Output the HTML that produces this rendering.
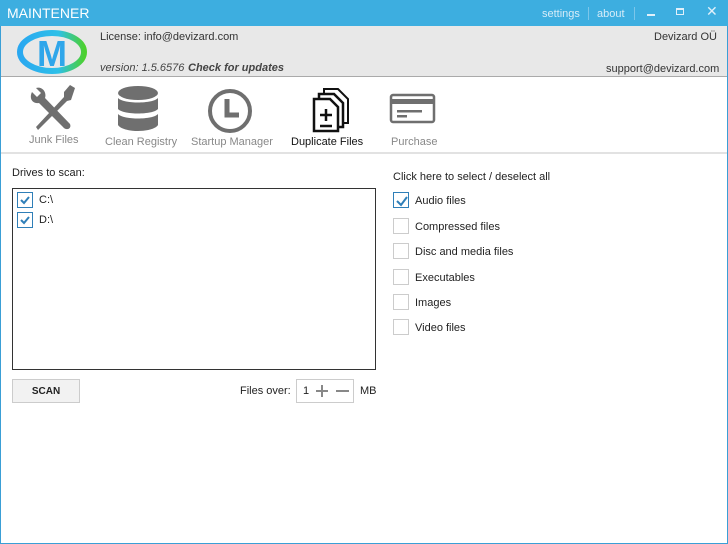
<!DOCTYPE html><html><head><style>
*{margin:0;padding:0;box-sizing:border-box}
body{width:728px;height:544px;overflow:hidden;font-family:"Liberation Sans",sans-serif;font-size:11px;color:#222;background:#fff;position:relative}
.a{position:absolute;white-space:nowrap}
.cb{position:absolute;width:16px;height:16px;border:1px solid #ccc;background:#fff}
.cb.on{border-color:#2f7fb8}
.cb.on svg{position:absolute;left:1px;top:1px}
.lbl{color:#888;font-size:11px}
</style></head><body>
<div class="a" style="left:0;top:0;width:728px;height:544px;border:1px solid #3a9fd6;border-top:none"></div>
<div class="a" style="left:0;top:0;width:728px;height:26px;background:#3daee0"></div>
<div class="a" style="left:7px;top:5px;color:#fff;font-size:14px">MAINTENER</div>
<div class="a" style="left:542px;top:8px;color:#d6ecf8;font-size:11px">settings</div>
<div class="a" style="left:588px;top:7px;width:1px;height:13px;background:#7cc6ea"></div>
<div class="a" style="left:597px;top:8px;color:#d6ecf8;font-size:11px">about</div>
<div class="a" style="left:634px;top:7px;width:1px;height:13px;background:#7cc6ea"></div>
<div class="a" style="left:647px;top:14px;width:8px;height:2px;background:#e0f0fa"></div>
<div class="a" style="left:676px;top:8px;width:8px;height:7px;border:1px solid #e0f0fa;border-top-width:2px"></div>
<div class="a" style="left:706px;top:3px;color:#e0f0fa;font-size:14px">✕</div>
<div class="a" style="left:1px;top:26px;width:726px;height:51px;background:#e8e8e8;border-bottom:1px solid #aaa"></div>
<svg class="a" style="left:16px;top:29px" width="72" height="46"><defs><linearGradient id="g" x1="0" x2="1"><stop offset="0" stop-color="#2aa8f0"/><stop offset=".6" stop-color="#2ec0e8"/><stop offset="1" stop-color="#4cd030"/></linearGradient></defs><ellipse cx="36" cy="23" rx="32" ry="19" fill="none" stroke="url(#g)" stroke-width="6"/><text x="36" y="37" text-anchor="middle" font-family="Liberation Sans" font-weight="bold" font-size="36" fill="#2fa6ea">M</text></svg>
<div class="a" style="left:100px;top:31px;color:#333">License: info@devizard.com</div>
<div class="a" style="left:100px;top:62px;color:#444;font-style:italic">version: 1.5.6576</div>
<div class="a" style="left:188px;top:62px;color:#444;font-style:italic;font-weight:bold">Check for updates</div>
<div class="a" style="left:654px;top:31px;color:#333">Devizard OÜ</div>
<div class="a" style="left:606px;top:63px;color:#333">support@devizard.com</div>
<!-- toolbar icons -->
<svg class="a" style="left:28px;top:84px" width="50" height="50" fill="#6f6f6f"><path d="M47 4 L42 1 L36 8 L36 13 L8 43 L10 46 L39 17 L43 16 Z"/><path d="M8 4 L13 9 L9 13 L4 8 C1 14 4 20 11 19 L35 43 C38 47 44 45 42 40 L17 14 C19 8 14 2 8 4Z"/></svg>
<svg class="a" style="left:117px;top:86px" width="42" height="48" fill="#6f6f6f"><ellipse cx="21" cy="7" rx="20" ry="7"/><path d="M1 12 C6 18 36 18 41 12 V23 C36 29 6 29 1 23Z"/><path d="M1 28 C6 34 36 34 41 28 V39 C36 47 6 47 1 39Z"/></svg>
<svg class="a" style="left:207px;top:88px" width="48" height="48"><circle cx="23" cy="23" r="20" fill="none" stroke="#6f6f6f" stroke-width="4"/><path d="M20 11 V27 H32" fill="none" stroke="#6f6f6f" stroke-width="5"/></svg>
<svg class="a" style="left:310px;top:85px" width="44" height="50" fill="none" stroke="#111" stroke-width="2.5"><path d="M4 14 H20 L28 22 V46 H4Z"/><path d="M9 14 V9 H24 L33 18 V42 H28"/><path d="M14 9 V4 H28 L38 14 V38 H33" stroke-width="2"/><path d="M16 24 V36 M10 30 H22 M10 41 H22"/></svg>
<svg class="a" style="left:389px;top:93px" width="48" height="32"><rect x="2" y="2" width="43" height="27" rx="2" fill="none" stroke="#6f6f6f" stroke-width="2.5"/><rect x="2" y="6" width="43" height="5" fill="#6f6f6f"/><rect x="8" y="17" width="25" height="2.5" fill="#6f6f6f"/><rect x="8" y="22" width="10" height="2.5" fill="#6f6f6f"/></svg>
<div class="a lbl" style="left:29px;top:134px">Junk Files</div>
<div class="a lbl" style="left:105px;top:136px">Clean Registry</div>
<div class="a lbl" style="left:191px;top:136px">Startup Manager</div>
<div class="a" style="left:291px;top:136px;color:#111">Duplicate Files</div>
<div class="a lbl" style="left:391px;top:136px">Purchase</div>
<div class="a" style="left:1px;top:152px;width:726px;height:2px;background:#e2e2e2"></div>
<!-- content -->
<div class="a" style="left:12px;top:167px">Drives to scan:</div>
<div class="a" style="left:12px;top:188px;width:364px;height:182px;border:1px solid #333"></div>
<div class="cb on" style="left:17px;top:192px"><svg width="12" height="12"><path d="M2 6 L5 9 L10 3" stroke="#2f7fb8" stroke-width="2" fill="none"/></svg></div>
<div class="a" style="left:39px;top:194px">C:\</div>
<div class="cb on" style="left:17px;top:212px"><svg width="12" height="12"><path d="M2 6 L5 9 L10 3" stroke="#2f7fb8" stroke-width="2" fill="none"/></svg></div>
<div class="a" style="left:39px;top:214px">D:\</div>
<div class="a" style="left:12px;top:379px;width:68px;height:24px;border:1px solid #ccc;background:#f2f2f2;font-size:10px;font-weight:bold;text-align:center;line-height:24px">SCAN</div>
<div class="a" style="left:240px;top:385px">Files over:</div>
<div class="a" style="left:296px;top:379px;width:58px;height:24px;border:1px solid #ccc"></div>
<div class="a" style="left:303px;top:385px">1</div>
<div class="a" style="left:316px;top:390px;width:12px;height:2px;background:#888"></div>
<div class="a" style="left:321px;top:385px;width:2px;height:12px;background:#888"></div>
<div class="a" style="left:336px;top:390px;width:13px;height:2px;background:#888"></div>
<div class="a" style="left:360px;top:385px">MB</div>
<div class="a" style="left:393px;top:171px">Click here to select / deselect all</div>
<div class="cb on" style="left:393px;top:192px"><svg width="14" height="14"><path d="M2 7 L6 11 L12 3" stroke="#2f7fb8" stroke-width="2" fill="none"/></svg></div>
<div class="a" style="left:415px;top:195px">Audio files</div>
<div class="cb" style="left:393px;top:218px"></div><div class="a" style="left:415px;top:221px">Compressed files</div>
<div class="cb" style="left:393px;top:243px"></div><div class="a" style="left:415px;top:246px">Disc and media files</div>
<div class="cb" style="left:393px;top:269px"></div><div class="a" style="left:415px;top:272px">Executables</div>
<div class="cb" style="left:393px;top:294px"></div><div class="a" style="left:415px;top:297px">Images</div>
<div class="cb" style="left:393px;top:319px"></div><div class="a" style="left:415px;top:322px">Video files</div>
</body></html>
